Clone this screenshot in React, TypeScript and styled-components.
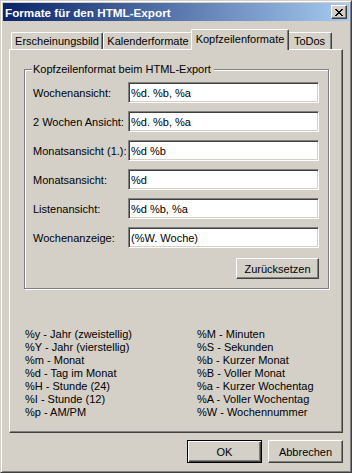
import React from 'react';
import styled, { createGlobalStyle } from 'styled-components';

const GlobalStyle = createGlobalStyle`
  html, body {
    margin: 0;
    padding: 0;
    background: #d4d0c8;
  }
  body {
    font-family: "Liberation Sans", Arial, sans-serif;
    font-size: 11px;
    color: #000;
  }
`;

// Fensterrahmen im klassischen Windows-Stil
const Window = styled.div`
  width: 352px;
  height: 473px;
  box-sizing: border-box;
  background: #d4d0c8;
  border: 1px solid;
  border-color: #d4d0c8 #404040 #404040 #d4d0c8;
  box-shadow: inset 1px 1px 0 #fff, inset -1px -1px 0 #808080;
  padding: 2px;
  display: flex;
  flex-direction: column;
`;

const TitleBar = styled.div`
  height: 18px;
  flex-shrink: 0;
  display: flex;
  align-items: center;
  justify-content: space-between;
  padding: 0 2px;
  background: linear-gradient(to right, #0a246a, #a6caf0);
  color: #fff;
  font-weight: bold;
  font-size: 11.7px;
`;

const CloseButton = styled.div`
  width: 16px;
  height: 14px;
  box-sizing: border-box;
  background: #d4d0c8;
  border: 1px solid;
  border-color: #fff #404040 #404040 #fff;
  box-shadow: inset -1px -1px 0 #808080;
  display: flex;
  align-items: center;
  justify-content: center;
`;

const Body = styled.div`
  flex: 1;
  display: flex;
  flex-direction: column;
  padding: 8px 6px 7px 6px;
`;

const TabStrip = styled.div`
  display: flex;
  align-items: flex-end;
  height: 20px;
  padding-left: 2px;
`;

const Tab = styled.div<{ $w: number; $active?: boolean }>`
  position: relative;
  box-sizing: border-box;
  width: ${(p) => (p.$active ? p.$w + 4 : p.$w)}px;
  height: ${(p) => (p.$active ? 21 : 17)}px;
  margin: ${(p) => (p.$active ? '0 -2px -1px -2px' : '0')};
  z-index: ${(p) => (p.$active ? 2 : 1)};
  background: #d4d0c8;
  border-top: 1px solid #fff;
  border-left: 1px solid #fff;
  border-right: 1px solid #404040;
  border-radius: 2px 2px 0 0;
  box-shadow: inset -1px 0 0 #808080;
  display: flex;
  align-items: center;
  justify-content: center;
  padding-bottom: ${(p) => (p.$active ? 2 : 0)}px;
  white-space: nowrap;
`;

const Panel = styled.div`
  height: 384px;
  box-sizing: border-box;
  border: 1px solid;
  border-color: #fff #404040 #404040 #fff;
  box-shadow: inset -1px -1px 0 #808080;
  padding: 12px 13px 0 14px;
`;

const GroupBox = styled.fieldset`
  margin: 0;
  padding: 6px 9px 9px 8px;
  border: 1px solid #808080;
  box-shadow: inset 1px 1px 0 #fff, 1px 1px 0 #fff;
  min-width: 0;
`;

const Legend = styled.legend`
  padding: 0 3px 0 1px;
  margin-left: -1px;
  line-height: 14px;
  background: #d4d0c8;
`;

const Rows = styled.div`
  display: flex;
  flex-direction: column;
  gap: 8px;
`;

const Row = styled.div`
  display: flex;
  align-items: center;
  height: 21px;
`;

const Label = styled.span`
  width: 95px;
  flex-shrink: 0;
`;

const TextField = styled.input`
  width: 192px;
  height: 21px;
  box-sizing: border-box;
  margin: 0;
  padding: 0 2px;
  font: inherit;
  color: #000;
  background: #fff;
  border: 1px solid;
  border-color: #808080 #fff #fff #808080;
  box-shadow: inset 1px 1px 0 #404040, inset -1px -1px 0 #d4d0c8;
  outline: none;
`;

const ResetRow = styled.div`
  display: flex;
  justify-content: flex-end;
  margin-top: 10px;
`;

const Button = styled.button<{ $w: number; $h: number; $default?: boolean }>`
  width: ${(p) => p.$w}px;
  height: ${(p) => p.$h}px;
  box-sizing: border-box;
  margin: 0;
  padding: 0;
  font: inherit;
  color: #000;
  background: #d4d0c8;
  border: 1px solid;
  border-color: ${(p) => (p.$default ? '#000' : '#fff #404040 #404040 #fff')};
  box-shadow: ${(p) =>
    p.$default
      ? 'inset 1px 1px 0 #fff, inset -1px -1px 0 #404040, inset -2px -2px 0 #808080'
      : 'inset -1px -1px 0 #808080, inset 1px 1px 0 #d4d0c8'};
  display: flex;
  align-items: center;
  justify-content: center;
`;

const Codes = styled.div`
  margin-top: 39px;
  margin-left: 1px;
  display: grid;
  grid-template-columns: 172px 1fr;
  line-height: 13px;
  white-space: nowrap;
`;

const Footer = styled.div`
  display: flex;
  justify-content: flex-end;
  gap: 6px;
  margin-top: 7px;
`;

const fields: [string, string][] = [
  ['Wochenansicht:', '%d. %b, %a'],
  ['2 Wochen Ansicht:', '%d. %b, %a'],
  ['Monatsansicht (1.):', '%d %b'],
  ['Monatsansicht:', '%d'],
  ['Listenansicht:', '%d %b, %a'],
  ['Wochenanzeige:', '(%W. Woche)'],
];

const left = [
  '%y - Jahr (zweistellig)',
  '%Y - Jahr (vierstellig)',
  '%m - Monat',
  '%d - Tag im Monat',
  '%H - Stunde (24)',
  '%I - Stunde (12)',
  '%p - AM/PM',
];

const right = [
  '%M - Minuten',
  '%S - Sekunden',
  '%b - Kurzer Monat',
  '%B - Voller Monat',
  '%a - Kurzer Wochentag',
  '%A - Voller Wochentag',
  '%W - Wochennummer',
];

const tabs = [
  { label: 'Erscheinungsbild', w: 92 },
  { label: 'Kalenderformate', w: 90 },
  { label: 'Kopfzeilenformate', w: 94, active: true },
  { label: 'ToDos', w: 45 },
];

const App: React.FC = () => {
  return (
    <>
      <GlobalStyle />
      <Window>
        <TitleBar>
          <span>Formate für den HTML-Export</span>
          <CloseButton>
            <svg width="8" height="7" viewBox="0 0 8 7" shapeRendering="crispEdges">
              <path d="M0 0h2v1h-2zM6 0h2v1h-2zM1 1h2v1h-2zM5 1h2v1h-2zM2 2h4v1h-4zM3 3h2v1h-2zM2 4h4v1h-4zM1 5h2v1h-2zM5 5h2v1h-2zM0 6h2v1h-2zM6 6h2v1h-2z" fill="#000" />
            </svg>
          </CloseButton>
        </TitleBar>

        <Body>
          <TabStrip>
            {tabs.map((t) => (
              <Tab key={t.label} $w={t.w} $active={t.active}>
                {t.label}
              </Tab>
            ))}
          </TabStrip>

          <Panel>
            <GroupBox>
              <Legend>Kopfzeilenformat beim HTML-Export</Legend>
              <Rows>
                {fields.map(([label, value]) => (
                  <Row key={label}>
                    <Label>{label}</Label>
                    <TextField value={value} readOnly />
                  </Row>
                ))}
              </Rows>
              <ResetRow>
                <Button $w={83} $h={21}>Zurücksetzen</Button>
              </ResetRow>
            </GroupBox>

            <Codes>
              {left.map((l, i) => (
                <React.Fragment key={l}>
                  <span>{l}</span>
                  <span>{right[i]}</span>
                </React.Fragment>
              ))}
            </Codes>
          </Panel>

          <Footer>
            <Button $w={75} $h={23} $default>OK</Button>
            <Button $w={75} $h={23}>Abbrechen</Button>
          </Footer>
        </Body>
      </Window>
    </>
  );
};

export default App;
